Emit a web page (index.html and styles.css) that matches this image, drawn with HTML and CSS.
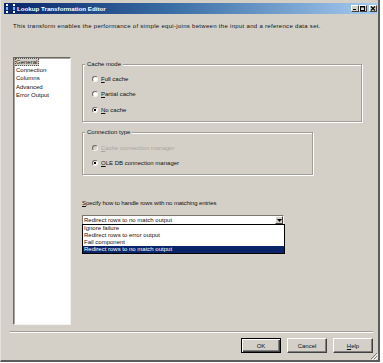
FILE: index.html
```html
<!DOCTYPE html>
<html>
<head>
<meta charset="utf-8">
<link rel="stylesheet" href="styles.css">
</head>
<body>
<div class="window">
  <div class="titlebar">
    <svg class="appicon" width="9" height="9" viewBox="0 0 9 9">
      <rect x="0" y="0" width="2" height="2" fill="#fff"/>
      <rect x="0" y="3" width="2" height="3" fill="#7fb8ff"/>
      <rect x="0" y="7" width="2" height="2" fill="#fff"/>
      <rect x="7" y="0" width="2" height="2" fill="#fff"/>
      <rect x="7" y="3" width="2" height="3" fill="#7fb8ff"/>
      <rect x="7" y="7" width="2" height="2" fill="#fff"/>
    </svg>
    <span class="title">Lookup Transformation Editor</span>
    <div class="controls">
      <span class="cbtn"><svg width="6" height="5" viewBox="0 0 6 5"><rect x="1" y="3" width="3" height="1" fill="#000"/></svg></span>
      <span class="cbtn"><svg width="6" height="5" viewBox="0 0 6 5"><rect x="0.5" y="0.5" width="4" height="4" fill="none" stroke="#000"/><rect x="0" y="0" width="5" height="1.5" fill="#000"/></svg></span>
      <span class="cbtn close"><svg width="6" height="5" viewBox="0 0 6 5"><path d="M1 0.5 L5 4.5 M5 0.5 L1 4.5" stroke="#000" stroke-width="1.1"/></svg></span>
    </div>
  </div>

  <p class="desc">This transform enables the performance of simple equi-joins between the input and a reference data set.</p>

  <div class="main">
    <ul class="nav">
      <li><span class="sel">General</span></li>
      <li>Connection</li>
      <li>Columns</li>
      <li>Advanced</li>
      <li>Error Output</li>
    </ul>

    <div class="pane">
      <div class="group g1">
        <span class="legend">Cache mode</span>
        <div class="opt"><span class="radio"></span><span><u>F</u>ull cache</span></div>
        <div class="opt"><span class="radio"></span><span><u>P</u>artial cache</span></div>
        <div class="opt"><span class="radio on"></span><span><u>N</u>o cache</span></div>
      </div>

      <div class="group g2">
        <span class="legend">Connection type</span>
        <div class="opt disabled"><span class="radio"></span><span><u>C</u>ache connection manager</span></div>
        <div class="opt"><span class="radio on"></span><span><u>O</u>LE DB connection manager</span></div>
      </div>

      <div class="prompt"><u>S</u>pecify how to handle rows with no matching entries</div>

      <div class="combo">
        <div class="field">
          <span class="val">Redirect rows to no match output</span>
          <span class="arrow"><svg width="5" height="3" viewBox="0 0 5 3"><path d="M0 0 H5 L2.5 3 Z" fill="#000"/></svg></span>
        </div>
        <ul class="dropdown">
          <li>Ignore failure</li>
          <li>Redirect rows to error output</li>
          <li>Fail component</li>
          <li class="hl">Redirect rows to no match output</li>
        </ul>
      </div>
    </div>
  </div>

  <div class="sep"></div>

  <div class="buttons">
    <button class="btn default">OK</button>
    <button class="btn">Cancel</button>
    <button class="btn"><u>H</u>elp</button>
  </div>

  <svg class="grip" width="8" height="8" viewBox="0 0 8 8">
    <path d="M7 1 L1 7 M7 4 L4 7" stroke="#808080" stroke-width="1"/>
    <path d="M8 2 L2 8 M8 5 L5 8" stroke="#fff" stroke-width="1"/>
  </svg>
</div>
</body>
</html>
```

FILE: styles.css
```css
html, body {
  margin: 0;
  padding: 0;
  background: #ffffff;
}

body {
  font-family: "Liberation Sans", Arial, sans-serif;
  font-size: 6px;
  color: #111;
}

.window {
  position: relative;
  width: 380px;
  height: 362px;
  box-sizing: border-box;
  background: #d4d0c8;
  border-left: 1px solid #e4e2dc;
  border-right: 2px solid #5c5c5c;
  border-bottom: 2px solid #5c5c5c;
  padding: 3px 1px 0 3px;
  display: flex;
  flex-direction: column;
}

/* title bar */
.titlebar {
  height: 11px;
  flex: none;
  display: flex;
  align-items: center;
  padding-left: 2px;
  background: linear-gradient(90deg, #0a246a 0%, #3a6ea5 45%, #a6caf0 100%);
}

.appicon {
  flex: none;
}

.title {
  color: #fff;
  font-weight: bold;
  font-size: 6.2px;
  margin-left: 2px;
  white-space: nowrap;
}

.controls {
  margin-left: auto;
  display: flex;
}

.cbtn {
  width: 8px;
  height: 7px;
  box-sizing: border-box;
  background: #d4d0c8;
  border: 1px solid;
  border-color: #fff #404040 #404040 #fff;
  display: flex;
  align-items: center;
  justify-content: center;
}

.cbtn svg {
  display: block;
}

.cbtn.close {
  margin-left: 2px;
}

/* description */
.desc {
  margin: 8px 0 0 9px;
  line-height: 8px;
  letter-spacing: 0.3px;
  white-space: nowrap;
}

/* main */
.main {
  display: flex;
  margin-top: 27px;
  height: 268px;
  flex: none;
}

.nav {
  width: 58px;
  box-sizing: border-box;
  margin: 0 0 0 9px;
  padding: 0 0 0 2px;
  list-style: none;
  background: #fff;
  border: 1px solid;
  border-color: #6d6a65 #f4f3f0 #f4f3f0 #6d6a65;
  box-shadow: inset 1px 1px 0 #a8a59e;
}

.nav li {
  line-height: 8.2px;
  white-space: nowrap;
}

.nav .sel {
  display: inline-block;
  background: #d4d0c8;
  outline: 1px dotted #555;
  outline-offset: -1px;
  margin-left: -1px;
  padding: 0 2px 0 1px;
}

.pane {
  position: relative;
  margin-left: 11px;
  flex: 1;
}

.group {
  box-sizing: border-box;
  border: 1px solid #a29e96;
  box-shadow: inset 1px 1px 0 #fff, 1px 1px 0 #fff;
}

.g1 {
  width: 280px;
  height: 58px;
  margin-top: 7px;
}

.g2 {
  width: 231px;
  height: 43px;
  margin-top: 10px;
}

.legend {
  display: block;
  width: max-content;
  background: #d4d0c8;
  line-height: 8px;
  margin: -5px 0 0 2px;
  padding: 0 2px;
}

.g1 .legend {
  margin-bottom: 3px;
}

.g2 .legend {
  margin-bottom: 4px;
}

.opt {
  display: flex;
  align-items: center;
  height: 15.5px;
  padding-left: 9px;
  white-space: nowrap;
}

.radio {
  width: 6px;
  height: 6px;
  box-sizing: border-box;
  border-radius: 50%;
  border: 1px solid;
  border-color: #6d6a65 #f4f3f0 #f4f3f0 #6d6a65;
  background: #fff;
  margin-right: 3px;
  flex: none;
}

.radio.on {
  background: radial-gradient(circle, #000 0, #000 1px, #fff 1.4px);
}

.opt.disabled {
  color: #aaa69d;
}

.opt.disabled .radio {
  background: #d4d0c8;
}

.prompt {
  margin-top: 24px;
  line-height: 8px;
  letter-spacing: -0.1px;
  white-space: nowrap;
}

/* combo */
.combo {
  position: relative;
  margin-top: 8px;
  width: 202px;
}

.field {
  height: 10px;
  box-sizing: border-box;
  background: #fff;
  border: 1px solid;
  border-color: #7a7770 #f4f3f0 #f4f3f0 #7a7770;
  display: flex;
  align-items: center;
}

.val {
  flex: 1;
  padding-left: 1px;
  line-height: 8px;
  white-space: nowrap;
}

.arrow {
  width: 8px;
  height: 8px;
  box-sizing: border-box;
  background: #d4d0c8;
  border: 1px solid;
  border-color: #fff #404040 #404040 #fff;
  display: flex;
  align-items: center;
  justify-content: center;
}

.arrow svg {
  display: block;
}

.dropdown {
  position: absolute;
  left: 0;
  top: 9px;
  width: 203px;
  box-sizing: border-box;
  margin: 0;
  padding: 0;
  list-style: none;
  background: #fff;
  border: 1px solid #000;
}

.dropdown li {
  line-height: 7px;
  padding-left: 1px;
  white-space: nowrap;
}

.dropdown li.hl {
  background: #0a246a;
  color: #fff;
}

/* bottom */
.sep {
  flex: none;
  height: 0;
  margin: 6px 4px 0 6px;
  border-top: 1px solid #a29e96;
  border-bottom: 1px solid #fff;
}

.buttons {
  flex: none;
  display: flex;
  justify-content: flex-end;
  gap: 6px;
  margin-top: 5px;
  padding-right: 4px;
}

.btn {
  width: 40px;
  height: 15px;
  box-sizing: border-box;
  margin: 0;
  padding: 0;
  font-family: "Liberation Sans", Arial, sans-serif;
  font-size: 6px;
  color: #111;
  background: #d4d0c8;
  border: 1px solid;
  border-color: #fff #404040 #404040 #fff;
  box-shadow: inset -1px -1px 0 #808080;
}

.btn.default {
  border: 1px solid #000;
  box-shadow: inset 1px 1px 0 #fff, inset -1px -1px 0 #404040, inset -2px -2px 0 #808080;
}

.grip {
  position: absolute;
  right: 0;
  bottom: 0;
}
```
